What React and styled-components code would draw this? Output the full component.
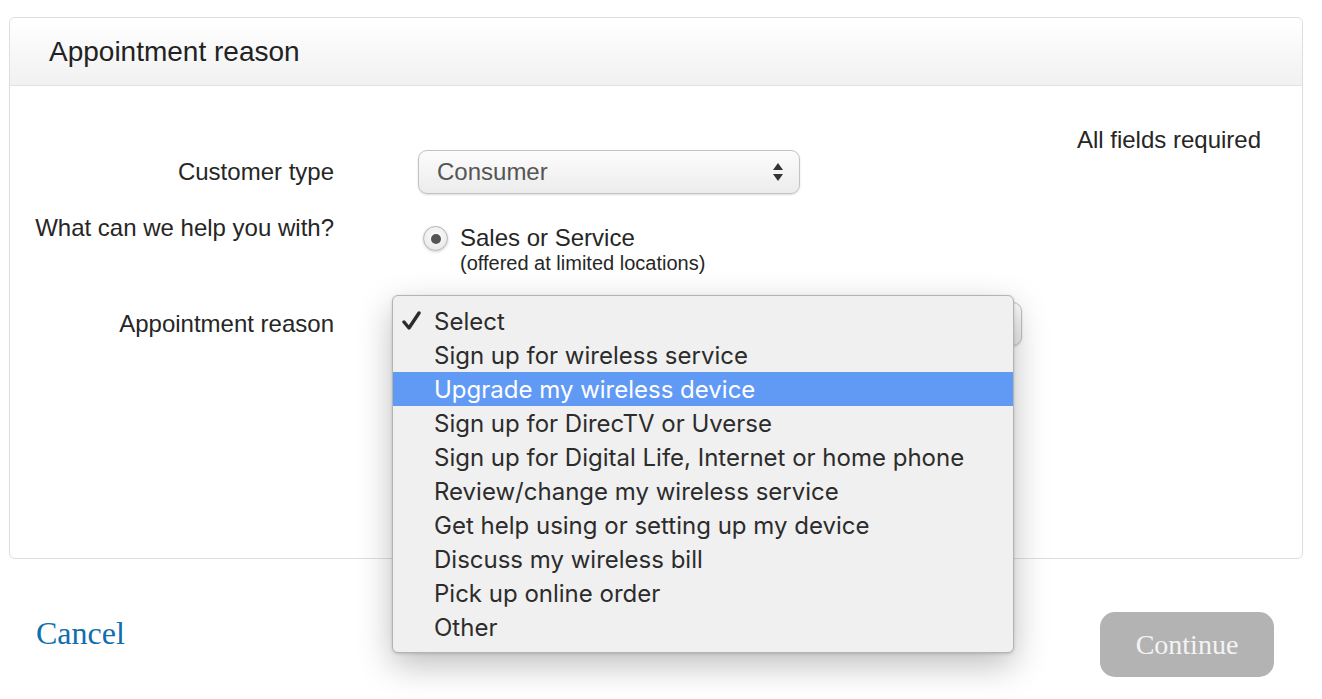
import React from "react";
import styled, { createGlobalStyle } from "styled-components";

const GlobalStyle = createGlobalStyle`
  html, body { margin: 0; padding: 0; background: #ffffff; }
  body { font-family: "Liberation Sans", Arial, Helvetica, sans-serif; color: #262626; }
  * { box-sizing: border-box; }
`;

const Page = styled.div`
  width: 1322px;
  height: 699px;
  padding: 17px 19px 0 9px;
  overflow: hidden;
`;

const Panel = styled.section`
  height: 542px;
  border: 1px solid #dedede;
  border-radius: 6px;
  background: #ffffff;
`;

const PanelHeader = styled.header`
  height: 68px;
  display: flex;
  align-items: center;
  padding-left: 39px;
  font-size: 28px;
  color: #222;
  border-bottom: 1px solid #e2e2e2;
  border-radius: 6px 6px 0 0;
  background: linear-gradient(#ffffff, #f1f1f1);
`;

const PanelBody = styled.div`
  display: flex;
  flex-direction: column;
  padding-right: 41px;
`;

const Note = styled.div`
  margin-top: 44px;
  line-height: 20px;
  font-size: 24px;
  text-align: right;
  color: #262626;
`;

const FormRow = styled.div`
  display: grid;
  grid-template-columns: 324px 1fr;
  column-gap: 84px;
  align-items: ${(p) => p.$align || "center"};
  margin-top: ${(p) => p.$top || 0}px;
`;

const Label = styled.div`
  text-align: right;
  font-size: 24px;
  line-height: 24px;
  color: #262626;
`;

const SelectWrap = styled.div`
  position: relative;
  width: ${(p) => p.$width}px;
`;

const SelectBox = styled.div`
  height: 44px;
  display: flex;
  align-items: center;
  justify-content: space-between;
  padding: 0 15px 0 18px;
  border: 1px solid #c2c2c2;
  border-radius: 9px;
  background: linear-gradient(#fcfcfc, #ececec);
  box-shadow: 0 1px 2px rgba(0, 0, 0, 0.14);
  font-size: 24px;
  color: #555;
`;

const RadioGroup = styled.div`
  display: flex;
  align-items: flex-start;
  gap: 12px;
  padding-top: 10px;
  margin-left: 5px;
`;

const Radio = styled.span`
  width: 25px;
  height: 25px;
  border-radius: 50%;
  border: 1px solid #b4b4b4;
  background: radial-gradient(circle at 50% 40%, #ffffff, #e2e2e2);
  box-shadow: 0 1px 3px rgba(0, 0, 0, 0.18);
  display: flex;
  align-items: center;
  justify-content: center;
  flex: none;
  &::after {
    content: "";
    width: 10px;
    height: 10px;
    border-radius: 50%;
    background: #555;
  }
`;

const RadioText = styled.div`
  display: flex;
  flex-direction: column;
`;

const RadioTitle = styled.span`
  font-size: 24px;
  line-height: 24px;
  color: #262626;
`;

const RadioSub = styled.span`
  font-size: 20px;
  line-height: 26px;
  color: #262626;
`;

const Menu = styled.ul`
  position: absolute;
  left: -26px;
  top: -7px;
  width: 622px;
  margin: 0;
  padding: 8px 0;
  list-style: none;
  background: #f0f0f0;
  border: 1px solid #b4b4b4;
  border-radius: 6px;
  box-shadow: 0 12px 34px rgba(0, 0, 0, 0.26), 0 1px 3px rgba(0, 0, 0, 0.15);
  z-index: 10;
`;

const MenuItem = styled.li`
  height: 34px;
  display: flex;
  align-items: center;
  padding-left: 9px;
  font-family: Inter, "Liberation Sans", Arial, sans-serif;
  font-size: 24px;
  color: ${(p) => (p.$active ? "#ffffff" : "#2c2c2c")};
  background: ${(p) => (p.$active ? "#619af5" : "transparent")};
`;

const CheckSlot = styled.span`
  width: 32px;
  flex: none;
  display: flex;
  align-items: center;
`;

const Footer = styled.div`
  display: flex;
  justify-content: space-between;
  align-items: flex-start;
  margin-top: 53px;
  padding: 0 29px 0 27px;
`;

const CancelLink = styled.a`
  margin-top: 3px;
  font-family: "Liberation Serif", "Times New Roman", serif;
  font-size: 32px;
  line-height: 36px;
  color: #0f6eae;
  text-decoration: none;
`;

const ContinueButton = styled.button`
  width: 174px;
  height: 65px;
  border: none;
  border-radius: 15px;
  background: #b3b3b3;
  color: #f4f4f4;
  font-family: "Liberation Serif", "Times New Roman", serif;
  font-size: 28px;
  padding: 0;
`;

const Arrows = () => (
  <svg width="12" height="20" viewBox="0 0 12 20">
    <path d="M6 1 L11 8 L1 8 Z" fill="#333" />
    <path d="M6 19 L11 12 L1 12 Z" fill="#333" />
  </svg>
);

const Check = () => (
  <svg width="19" height="20" viewBox="0 0 19 20">
    <path
      d="M2 11 L7 17 L17 2"
      fill="none"
      stroke="#2c2c2c"
      strokeWidth="3.4"
      strokeLinecap="round"
      strokeLinejoin="round"
    />
  </svg>
);

const options = [
  "Select",
  "Sign up for wireless service",
  "Upgrade my wireless device",
  "Sign up for DirecTV or Uverse",
  "Sign up for Digital Life, Internet or home phone",
  "Review/change my wireless service",
  "Get help using or setting up my device",
  "Discuss my wireless bill",
  "Pick up online order",
  "Other",
];

export default function App() {
  return (
    <>
      <GlobalStyle />
      <Page>
        <Panel>
          <PanelHeader>Appointment reason</PanelHeader>
          <PanelBody>
            <Note>All fields required</Note>
            <FormRow>
              <Label>Customer type</Label>
              <SelectWrap $width={382}>
                <SelectBox>
                  <span>Consumer</span>
                  <Arrows />
                </SelectBox>
              </SelectWrap>
            </FormRow>
            <FormRow $align="start" $top={22}>
              <Label>What can we help you with?</Label>
              <RadioGroup>
                <Radio />
                <RadioText>
                  <RadioTitle>Sales or Service</RadioTitle>
                  <RadioSub>(offered at limited locations)</RadioSub>
                </RadioText>
              </RadioGroup>
            </FormRow>
            <FormRow $top={26}>
              <Label>Appointment reason</Label>
              <SelectWrap $width={604}>
                <SelectBox>
                  <span />
                  <Arrows />
                </SelectBox>
                <Menu>
                  {options.map((o, i) => (
                    <MenuItem key={o} $active={i === 2}>
                      <CheckSlot>{i === 0 ? <Check /> : null}</CheckSlot>
                      {o}
                    </MenuItem>
                  ))}
                </Menu>
              </SelectWrap>
            </FormRow>
          </PanelBody>
        </Panel>
        <Footer>
          <CancelLink href="#">Cancel</CancelLink>
          <ContinueButton>Continue</ContinueButton>
        </Footer>
      </Page>
    </>
  );
}
